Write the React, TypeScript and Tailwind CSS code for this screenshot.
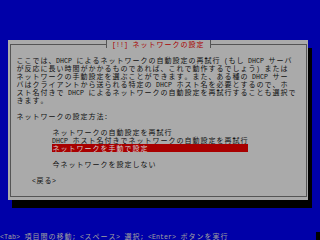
import React from "react";

const isWide = (c: string) => c.charCodeAt(0) > 0xff;

// one cell per character: 4px for half-width, 8px for full-width
function Txt({ s }: { s: string }) {
  return (
    <>
      {Array.from(s).map((c, i) =>
        isWide(c) ? (
          <span
            key={i}
            className="inline-block w-[8px] h-[8px] text-center text-[7px] leading-[8px] font-['Noto_Sans_CJK_JP',sans-serif]"
          >
            {c}
          </span>
        ) : (
          <span
            key={i}
            className="inline-block w-[4px] h-[8px] text-[6.6px] leading-[11px] whitespace-pre font-['Liberation_Mono',monospace]"
          >
            {c}
          </span>
        )
      )}
    </>
  );
}

const Row = ({ s, className = "" }: { s?: string; className?: string }) => (
  <div className={"flex h-[8px] " + className}>{s ? <Txt s={s} /> : null}</div>
);

const paragraph = [
  "ここでは、DHCP によるネットワークの自動設定の再試行 (もし DHCP サーバ",
  "が反応に長い時間がかかるものであれば、これで動作するでしょう) または",
  "ネットワークの手動設定を選ぶことができます。また、ある種の DHCP サー",
  "バはクライアントから送られる特定の DHCP ホスト名を必要とするので、ホ",
  "スト名付きで DHCP によるネットワークの自動設定を再試行することも選択で",
  "きます。",
];

const methods = [
  "ネットワークの自動設定を再試行",
  "DHCP ホスト名付きでネットワークの自動設定を再試行",
  "ネットワークを手動で設定",
];

export default function App() {
  const selected = 2;

  return (
    <div className="w-[320px] h-[240px] bg-[#0000a8] flex flex-col overflow-hidden">
      {/* dialog */}
      <div className="relative ml-[8px] mt-[40px] w-[300px] h-[160px] bg-[#aaaaaa] shadow-[4px_8px_0_0_#000] text-[#111111]">
        <div className="ml-[2px] mt-[4px] w-[297px] h-[153px] border border-[#555555] pl-[5px] pt-[11px] flex flex-col">
          {paragraph.map((line, i) => (
            <Row key={i} s={line} />
          ))}
          <Row />
          <Row s="ネットワークの設定方法:" />
          <Row />
          {methods.map((m, i) => (
            <div
              key={i}
              className={
                i === selected
                  ? "ml-[36px] w-[196px] flex h-[8px] bg-[#a80000] text-[#d0d0d0]"
                  : "ml-[36px] w-[196px] flex h-[8px]"
              }
            >
              <Txt s={m} />
            </div>
          ))}
          <Row />
          <Row s="今ネットワークを設定しない" className="ml-[36px]" />
          <Row />
          <Row s="<戻る>" className="ml-[16px]" />
        </div>

        {/* title over the top border */}
        <div className="absolute top-0 left-[98px] w-[105px] h-[8px] border-x border-[#555555] bg-[#aaaaaa] pl-[5px] flex text-[#a80000]">
          <Txt s="[!!] ネットワークの設定" />
        </div>
      </div>

      {/* help line */}
      <div className="mt-auto flex h-[8px] text-[#a0a0a0]">
        <Txt s="<Tab> 項目間の移動; <スペース> 選択; <Enter> ボタンを実行" />
        <div className="ml-auto w-[4px] h-[8px] bg-black" />
      </div>
    </div>
  );
}
